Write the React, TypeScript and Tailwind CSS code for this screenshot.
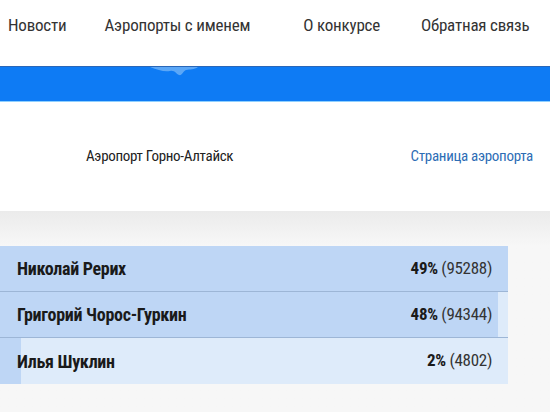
import React from 'react';

const results = [
  { name: 'Николай Рерих', pct: 49, votes: 95288 },
  { name: 'Григорий Чорос-Гуркин', pct: 48, votes: 94344 },
  { name: 'Илья Шуклин', pct: 2, votes: 4802 },
];

function Nav() {
  return (
    <nav className="flex items-center h-[52px] pl-2 text-[17px] tracking-[-0.2px] text-[#333] whitespace-nowrap">
      <a>Новости</a>
      <a className="ml-[38px]">Аэропорты с именем</a>
      <a className="ml-[53px]">О конкурсе</a>
      <a className="ml-[41px]">Обратная связь</a>
    </nav>
  );
}

function Banner() {
  return (
    <div className="mt-[14px] h-[35px] bg-[#0e7bf4] border-t border-[#2a67b8] shadow-[0_1px_0_#8fd0ff] relative overflow-hidden">
      <svg className="absolute left-[150px] top-0" width="48" height="12" viewBox="0 0 48 12">
        <path d="M0 0 H48 C44 3 40 2 36 3 C33 4 32 9 29 8 C26 7 25 3 20 4 C14 5 8 3 0 0 Z" fill="#6fb3f8" opacity="0.8" />
      </svg>
    </div>
  );
}

export default function App() {
  const max = Math.max(...results.map((r) => r.pct));
  return (
    <div className="w-[550px] h-[412px] bg-white overflow-hidden font-['Roboto_Condensed',sans-serif]">
      <Nav />
      <Banner />
      <div className="flex items-center justify-between h-[110px] pl-[86px] pr-[17px] text-[15px] tracking-[-0.3px]">
        <span className="text-[#222]">Аэропорт Горно-Алтайск</span>
        <a className="text-[#2d6db5]">Страница аэропорта</a>
      </div>
      <div className="bg-gradient-to-b from-[#ebebeb] to-[#f7f7f7] to-[35px] h-[201px] pt-[35px]">
        <div className="w-[508px]">
          {results.map((r, idx) => (
            <div
              key={r.name}
              className={`relative h-[46px] bg-[#deebfa] ${idx < results.length - 1 ? 'border-b border-[#9db6d6]' : ''}`}
            >
              <div className="absolute inset-y-0 left-0 bg-[#bed6f5]" style={{ width: `${(r.pct / max) * 100}%` }} />
              <div className="relative flex items-center justify-between h-full pl-[17px] pr-[16px] tracking-[-0.3px] text-[#1a1a1a]">
                <span className="font-bold text-[18px]">{r.name}</span>
                <span className="text-[17px]">
                  <b>{r.pct}%</b> <span className="text-[#333]">({r.votes})</span>
                </span>
              </div>
            </div>
          ))}
        </div>
      </div>
    </div>
  );
}
